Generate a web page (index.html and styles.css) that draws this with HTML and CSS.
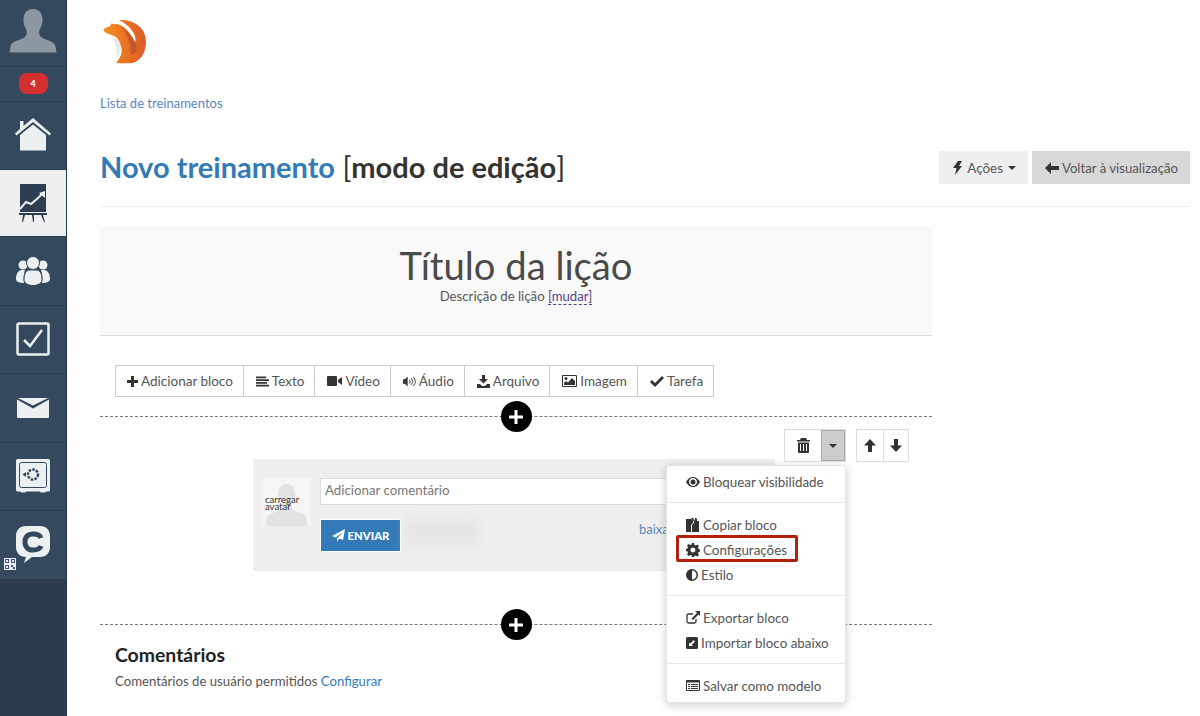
FILE: index.html
```html
<!DOCTYPE html>
<html lang="pt-br">
<head>
    <meta charset="UTF-8">
    <meta name="viewport" content="width=device-width, initial-scale=1.0">
    <title>Novo treinamento</title>
    <link rel="stylesheet" href="styles.css">
</head>
<body>
    <!-- Menu lateral -->
    <nav class="sidebar">
        <a class="side-item side-user">
            <svg width="48" height="44" viewBox="0 0 48 44"><path fill="#8d97a3" d="M24 0c7 0 9.500 5 9.500 11 0 4-1 6-2.500 9-1.500 3-1 6 1 8 3 2.500 13 4 14.500 9l1 6.500H.5l1-6.500c1.500-5 11.500-6.500 14.500-9 2-2 2.500-5 1-8-1.500-3-2.500-5-2.500-9C14.500 5 17 0 24 0z"/></svg>
        </a>
        <a class="side-item side-badge"><span class="badge">4</span></a>
        <a class="side-item">
            <svg width="36" height="34" viewBox="0 0 36 34"><path fill="#ecf0f1" d="M18 0 36 15.500l-1.500 2L18 4 1.500 17.500 0 15.500 5 11V3h3.500v5z"/><path fill="#ecf0f1" d="M18 6.500 31 17v15.500H5V17z"/></svg>
        </a>
        <a class="side-item active">
            <svg width="28" height="38" viewBox="0 0 28 38"><path fill="#2d3e50" d="M1 0h26v28H1z"/><path fill="none" stroke="#ecf0f1" stroke-width="2" d="M1 25l6-7 5 2 7-6 5-5"/><path fill="#ecf0f1" d="M26 7v7l-6-5z"/><path fill="#2d3e50" d="M0 29h28v2H0zM4 31h2l-2 7H3zM13 31h2v7h-1zM22 31h2l2 7h-1z"/></svg>
        </a>
        <a class="side-item">
            <svg width="34" height="30" viewBox="0 0 34 30"><g fill="#ecf0f1"><circle cx="7" cy="9" r="4.500"/><circle cx="27" cy="9" r="4.500"/><path d="M0 23c0-6 3-9 6-9h3c-1 3-2 8-1 13-4 0-8-1-8-4zM34 23c0-6-3-9-6-9h-3c1 3 2 8 1 13 4 0 8-1 8-4z"/><circle cx="17" cy="7" r="6.500" stroke="#34495e"/><path stroke="#34495e" d="M8 24c0-8 3-10 6-10h6c3 0 6 2 6 10 0 3-4 5.500-9 5.500S8 27 8 24z"/></g></svg>
        </a>
        <a class="side-item">
            <svg width="34" height="34" viewBox="0 0 34 34"><rect x="1.500" y="1.500" width="31" height="31" rx="1.500" fill="none" stroke="#ecf0f1" stroke-width="2.500"/><path fill="none" stroke="#ecf0f1" stroke-width="2.500" d="M8 18l6 6L26 8"/></svg>
        </a>
        <a class="side-item">
            <svg width="32" height="20" viewBox="0 0 32 20"><path fill="#ecf0f1" d="M1 0h30L16 7.500zM0 1.500l16 9 16-9V19q0 1-1 1H1q-1 0-1-1z"/></svg>
        </a>
        <a class="side-item">
            <svg width="34" height="34" viewBox="0 0 34 34"><path fill="#ecf0f1" d="M1.500 0h31Q34 0 34 1.500V31q0 1.500-1.500 1.500H30l-1 1h-4l-1-1H10l-1 1H5l-1-1H1.500Q0 32.500 0 31V1.500Q0 0 1.500 0z"/><rect x="3.500" y="3.500" width="27" height="25" rx="2" fill="none" stroke="#34495e"/><circle cx="17" cy="15.500" r="5" fill="none" stroke="#34495e" stroke-width="2.500" stroke-dasharray="2.500 1.200"/><path fill="#34495e" d="M6.500 15.500l3.500-2.500v5z"/></svg>
        </a>
        <a class="side-item side-chat">
            <svg width="34" height="38" viewBox="0 0 34 38"><path fill="#ecf0f1" d="M10 0h14c6 0 10 4 10 10v11c0 6-4 10-10 10H16l-8 6 2-6C4 31 0 27 0 21V10C0 4 4 0 10 0z"/><path fill="none" stroke="#34495e" stroke-width="5" d="M25 12c-1-3-4-4-8-4-5 0-8 3-8 8s3 8 8 8c4 0 7-1 8-4"/></svg>
            <svg class="qr" width="12" height="12" viewBox="0 0 12 12"><path fill="#ecf0f1" d="M0 0h12v12H0z"/><path fill="#3f4f8f" d="M1 1h4v4H1zM7 1h4v4H7zM1 7h4v4H1zM7 7h2v2H7zM9 9h2v2H9z"/><path fill="#ecf0f1" d="M2 2h2v2H2zM8 2h2v2H8zM2 8h2v2H2z"/></svg>
        </a>
    </nav>

    <main class="content">
        <svg class="logo" width="50" height="48" viewBox="0 0 50 48">
            <defs><linearGradient id="laranja" x1="0" y1="0" x2="1" y2="0"><stop offset="0" stop-color="#f78d1e"/><stop offset="1" stop-color="#dd5b28"/></linearGradient></defs>
            <path fill="#e8eaea" d="M9 17c5 3 7 9 8 23 3-5 5-10 4-14-2-5-6-7-12-9z"/>
            <path fill="url(#laranja)" d="M3.300 12C5 9 9 9 10 8l1.700-2.700c1.300.7 2.300 1.200 4.300.7 8 0 15 10 19 18 2-4-1-14-16-22 15-1 27 8 27 22 0 12-7 21-16 21.300H16c3-4.300 6-8.300 5.700-13.300-.7-6-2.700-11-6.700-13.500-4-2.500-10-2.500-11.700-6.500z"/>
            <path fill="#a8482a" opacity=".55" d="M22 10c8 5 13 12 15 20-1 5-4 8-6 6 0-10-4-19-9-26z"/>
        </svg>

        <a class="crumb">Lista de treinamentos</a>

        <header class="page-head">
            <h1><span class="title-link">Novo treinamento</span> <span class="title-mode">[<b>modo de edição</b>]</span></h1>
            <div class="head-actions">
                <button class="head-btn">
                    <svg width="9" height="14" viewBox="0 0 9 14"><path fill="#333" d="M5 0h4L6 5h3L2 14l1.500-7H0z"/></svg>
                    Ações <i class="caret"></i>
                </button>
                <button class="head-btn dark">
                    <svg width="14" height="12" viewBox="0 0 14 12"><path fill="#333" d="M6 0v4h8v4H6v4L0 6z"/></svg>
                    Voltar à visualização
                </button>
            </div>
        </header>

        <div class="column">
            <section class="lesson-head">
                <h2>Título da lição</h2>
                <p>Descrição de lição <a class="change">[mudar]</a></p>
            </section>

            <div class="add-bar">
                <a class="add-item">
                    <svg width="11" height="11" viewBox="0 0 11 11"><path fill="#333" d="M4 0h3v4h4v3H7v4H4V7H0V4h4z"/></svg>
                    Adicionar bloco
                </a>
                <a class="add-item">
                    <svg width="13" height="11" viewBox="0 0 14 11"><path fill="#333" d="M0 0h11v2H0zM0 3h14v2H0zM0 6h12v2H0zM0 9h14v2H0z"/></svg>
                    Texto
                </a>
                <a class="add-item">
                    <svg width="15" height="10" viewBox="0 0 15 10"><path fill="#333" d="M1 0h8q1 0 1 1v8q0 1-1 1H1q-1 0-1-1V1q0-1 1-1zM11 4l4-3v8l-4-3z"/></svg>
                    Vídeo
                </a>
                <a class="add-item">
                    <svg width="13" height="11" viewBox="0 0 14 11"><path fill="#333" d="M0 3h2l3-3v11L2 8H0z"/><path fill="none" stroke="#333" d="M7 3.500q1.500 2 0 4M9 2q3 3.500 0 7M11 .5q4.500 5 0 10"/></svg>
                    Áudio
                </a>
                <a class="add-item">
                    <svg width="13" height="13" viewBox="0 0 13 13"><path fill="#333" d="M5 0h3v4h3L6.500 8.500 2 4h3zM0 9h3l2 2h3l2-2h3v4H0z"/></svg>
                    Arquivo
                </a>
                <a class="add-item">
                    <svg width="15" height="12" viewBox="0 0 15 12"><path fill="#333" d="M1 0h13q1 0 1 1v10q0 1-1 1H1q-1 0-1-1V1q0-1 1-1zm0 1v10h13V1z"/><circle fill="#333" cx="4" cy="3.500" r="1.500"/><path fill="#333" d="M2 10V8l2-2 2 1.500L10 3l3 3v4z"/></svg>
                    Imagem
                </a>
                <a class="add-item">
                    <svg width="14" height="11" viewBox="0 0 14 11"><path fill="#333" d="M0 6l2-2 3 3 7-7 2 2-9 9z"/></svg>
                    Tarefa
                </a>
            </div>

            <div class="divider">
                <span class="plus"><svg width="14" height="14" viewBox="0 0 14 14"><path fill="#fff" d="M5.500 0h3v5.500H14v3H8.500V14h-3V8.500H0v-3h5.500z"/></svg></span>
            </div>

            <div class="block">
                <div class="block-tools">
                    <div class="tool-group">
                        <button class="tool wide">
                            <svg width="13" height="15" viewBox="0 0 13 15"><path fill="#333" d="M4 0h5l1 2h3v1.500H0V2h3zM1 4.500h11V14q0 1-1 1H2q-1 0-1-1zM3 6v7h1V6zm3 0v7h1V6zm3 0v7h1V6z"/></svg>
                        </button>
                        <button class="tool toggle"><i class="caret"></i></button>
                    </div>
                    <div class="tool-group">
                        <button class="tool">
                            <svg width="12" height="13" viewBox="0 0 12 13"><path fill="#333" d="M6 0l6 6.500H8V13H4V6.500H0z"/></svg>
                        </button>
                        <button class="tool">
                            <svg width="12" height="13" viewBox="0 0 12 13"><path fill="#333" d="M4 0h4v6.500h4L6 13 0 6.500h4z"/></svg>
                        </button>
                    </div>
                </div>

                <div class="comment-card">
                    <div class="avatar">
                        <svg width="47" height="48" viewBox="0 0 47 48"><path fill="#e3e3e3" d="M23.500 6c6 0 8.500 4 8.500 10 0 4-1 6-2.500 9-1.500 3-1 5 1 7 3 2 11 3 13 7l1 9H3l1-9c2-4 10-5 13-7 2-2 2.500-4 1-7-1.500-3-2.500-5-2.500-9 0-6 2.500-10 8.500-10z"/></svg>
                        <span class="avatar-label">carregar avatar</span>
                    </div>
                    <div class="comment-form">
                        <input class="comment-input" type="text" placeholder="Adicionar comentário">
                        <div class="comment-actions">
                            <button class="send">
                                <svg width="13" height="13" viewBox="0 0 13 13"><path fill="#fff" d="M13 0l-2 11-4-1.500L5 13v-3.500L11 3 3.500 8.500 0 7z"/></svg>
                                ENVIAR
                            </button>
                            <div class="blurred"></div>
                            <a class="download">baixa</a>
                        </div>
                    </div>
                </div>

                <!-- Menu do bloco -->
                <ul class="block-menu">
                    <li class="menu-item">
                        <svg width="14" height="10" viewBox="0 0 14 10"><path fill="#333" fill-rule="evenodd" d="M7 0c3 0 5.500 2 7 5-1.500 3-4 5-7 5S1.500 8 0 5c1.500-3 4-5 7-5zm0 1C4.500 1 3 3 3 5s2 4 4 4 4-2 4-4-1.500-4-4-4z"/><circle fill="#333" cx="7" cy="5" r="2.500"/></svg>
                        Bloquear visibilidade
                    </li>
                    <li class="menu-sep"></li>
                    <li class="menu-item">
                        <svg width="14" height="14" viewBox="0 0 14 14"><path fill="#333" d="M0 1h5l2 2v2L5 7v7H0zM5 0h2l2 3H7zM8 3h1V0h1l3 3v11H6V7l2-2zM11 1v2h2z"/></svg>
                        Copiar bloco
                    </li>
                    <li class="menu-item marked">
                        <svg width="14" height="14" viewBox="0 0 14 14"><path fill="#333" fill-rule="evenodd" d="M6 0h2l.400 2 1.300.500L11.500 1.500 13 3l-1 1.700.500 1.300L14 6.500v2l-1.500.400-.500 1.300 1 1.800-1.500 1.500-1.800-1-1.300.500L8 14H6l-.400-1.500-1.300-.500-1.800 1L1 11.500l1-1.800-.500-1.300L0 8V6l1.500-.400.500-1.300L1 2.500 2.500 1l1.800 1 1.300-.500zM7 4.500a2.500 2.500 0 1 0 0 5 2.500 2.500 0 0 0 0-5z"/></svg>
                        Configurações
                    </li>
                    <li class="menu-item">
                        <svg width="12" height="12" viewBox="0 0 12 12"><path fill="#333" fill-rule="evenodd" d="M6 0a6 6 0 1 1 0 12A6 6 0 0 1 6 0zm0 1.500v9a4.500 4.500 0 0 0 0-9z"/></svg>
                        Estilo
                    </li>
                    <li class="menu-sep"></li>
                    <li class="menu-item">
                        <svg width="14" height="13" viewBox="0 0 14 13"><path fill="none" stroke="#333" stroke-width="1.300" d="M7 3H2.500Q1 3 1 4.500v6Q1 12 2.500 12h6q1.500 0 1.500-1.500V8"/><path fill="#333" d="M9 0h5v5l-1.500-1.500L7 9 5.500 7.500 11 2z"/></svg>
                        Exportar bloco
                    </li>
                    <li class="menu-item">
                        <svg width="12" height="12" viewBox="0 0 12 12"><path fill="#333" d="M1.500 0h9Q12 0 12 1.500v9q0 1.500-1.500 1.500h-9Q0 12 0 10.500v-9Q0 0 1.500 0z"/><path fill="#fff" d="M3 9V5.500L4.300 6.800 7.500 3 9 4.500 5.700 8 7 9z"/></svg>
                        Importar bloco abaixo
                    </li>
                    <li class="menu-sep"></li>
                    <li class="menu-item">
                        <svg width="14" height="11" viewBox="0 0 14 11"><path fill="#333" fill-rule="evenodd" d="M1 0h12q1 0 1 1v9q0 1-1 1H1q-1 0-1-1V1q0-1 1-1zm0 2.500V10h12V2.500zM2 4h2v1H2zm3 0h7v1H5zM2 6h2v1H2zm3 0h7v1H5zM2 8h2v1H2zm3 0h7v1H5z"/></svg>
                        Salvar como modelo
                    </li>
                </ul>
            </div>

            <div class="divider second">
                <span class="plus"><svg width="14" height="14" viewBox="0 0 14 14"><path fill="#fff" d="M5.500 0h3v5.500H14v3H8.500V14h-3V8.500H0v-3h5.500z"/></svg></span>
            </div>

            <section class="comments">
                <h3>Comentários</h3>
                <p>Comentários de usuário permitidos <a class="link">Configurar</a></p>
            </section>
        </div>
    </main>
</body>
</html>
```

FILE: styles.css
```css
* {
    box-sizing: border-box;
}

html, body {
    height: 100%;
}

body {
    margin: 0;
    display: flex;
    overflow: hidden;
    font-family: "Lato", Arial, sans-serif;
    font-size: 13.5px;
    color: #555;
    background-color: #fff;
}

/* Menu lateral */
.sidebar {
    width: 67px;
    flex-shrink: 0;
    height: 716px;
    display: flex;
    flex-direction: column;
    background-color: #2c3c4e;
    border-right: 1px solid #24384c;
}

.side-item {
    position: relative;
    height: 68.5px;
    display: flex;
    align-items: center;
    justify-content: center;
    background-color: #34495e;
    border-bottom: 1px solid #2c3e50;
}

.side-user {
    height: 67px;
    align-items: flex-end;
    padding-bottom: 13px;
}

.side-badge {
    height: 34.5px;
}

.side-item.active {
    height: 67px;
    background-color: #efefef;
}

.badge {
    width: 29px;
    height: 21px;
    border-radius: 8px;
    background-color: #d32f2f;
    color: #fff;
    font-size: 9px;
    font-weight: 900;
    line-height: 21px;
    text-align: center;
}

.qr {
    position: absolute;
    left: 4px;
    bottom: 9px;
}

/* Conteudo */
.content {
    flex: 1;
    min-width: 0;
    padding: 18px 10px 0 33px;
}

.logo {
    display: block;
}

.crumb {
    display: block;
    margin-top: 29px;
    color: #5b87b9;
    font-size: 13px;
    line-height: 17px;
}

.page-head {
    display: flex;
    justify-content: space-between;
    align-items: center;
    height: 64px;
    margin-top: 31px;
    padding-bottom: 14px;
    border-bottom: 1px solid #eee;
}

.page-head h1 {
    margin: -3px 0 0;
    font-size: 29px;
    font-weight: 400;
    color: #333;
}

.title-link {
    color: #337ab7;
    font-weight: 700;
}

.title-mode b {
    font-weight: 700;
}

.head-actions {
    display: flex;
    gap: 4px;
}

.head-btn {
    height: 33px;
    padding: 0 12px 0 14px;
    display: flex;
    align-items: center;
    gap: 5px;
    border: none;
    background-color: #eee;
    color: #555;
    font-family: inherit;
    font-size: 13.4px;
}

.head-btn.dark {
    padding-left: 13px;
    gap: 3px;
    background-color: #d8d8d8;
    font-size: 13.2px;
}

.caret {
    display: inline-block;
    width: 0;
    height: 0;
    border-top: 4px solid #333;
    border-left: 4px solid transparent;
    border-right: 4px solid transparent;
}

.column {
    width: 832px;
}

.lesson-head {
    margin-top: 19px;
    height: 110px;
    padding-top: 16px;
    background-color: #f9f9f9;
    border-bottom: 1px solid #ddd;
    text-align: center;
}

.lesson-head h2 {
    margin: 0;
    font-size: 38.2px;
    font-weight: 400;
    line-height: 46px;
    color: #4a4a4a;
}

.lesson-head p {
    margin: 0;
    font-size: 13.2px;
    line-height: 17px;
}

.change {
    color: #5a3d8a;
    border-bottom: 1px dashed #5a3d8a;
}

.add-bar {
    display: inline-flex;
    margin: 29px 0 0 15px;
    height: 32px;
    border: 1px solid #ccc;
    vertical-align: top;
}

.add-item {
    display: flex;
    align-items: center;
    gap: 3px;
    padding: 0 10px 0 12px;
    border-left: 1px solid #ccc;
}

.add-item:first-child {
    padding-left: 11px;
    border-left: none;
}

.divider {
    position: relative;
    display: flex;
    justify-content: center;
    height: 0;
    margin-top: 19px;
    border-top: 1px dashed #777;
}

.divider.second {
    margin-top: 53px;
}

.plus {
    position: absolute;
    top: -16px;
    width: 31px;
    height: 31px;
    display: flex;
    align-items: center;
    justify-content: center;
    border-radius: 50%;
    background-color: #000;
}

/* Bloco de comentario */
.block {
    position: relative;
}

.block-tools {
    display: flex;
    justify-content: flex-end;
    gap: 10px;
    margin: 12px 23px 0 0;
    height: 33px;
}

.tool-group {
    display: flex;
    border: 1px solid #ddd;
}

.tool {
    width: 25.5px;
    padding: 0;
    display: flex;
    align-items: center;
    justify-content: center;
    border: none;
    background-color: #fff;
}

.tool + .tool {
    border-left: 1px solid #ddd;
}

.tool.wide {
    width: 36px;
}

.tool.toggle {
    width: 24px;
    background-color: #ccc;
    border: 1px solid #aaa;
}

.comment-card {
    width: 522px;
    height: 112px;
    margin: -3px 0 0 153px;
    padding: 19px 10px;
    display: flex;
    gap: 10px;
    background-color: #efefef;
}

.avatar {
    position: relative;
    width: 47px;
    height: 48px;
    flex-shrink: 0;
    background-color: #f6f6f6;
}

.avatar svg {
    display: block;
}

.avatar-label {
    position: absolute;
    left: 2px;
    top: 18px;
    width: 40px;
    color: #333;
    font-size: 9.5px;
    line-height: 7px;
}

.comment-form {
    flex: 1;
}

.comment-input {
    display: block;
    width: 100%;
    height: 27px;
    padding: 0 4px 3px;
    border: 1px solid #ddd;
    font-family: inherit;
    font-size: 13.3px;
}

.comment-input::placeholder {
    color: #777;
}

.comment-actions {
    display: flex;
    align-items: flex-start;
    margin-top: 14px;
}

.send {
    width: 81px;
    height: 33px;
    padding: 0;
    display: flex;
    align-items: center;
    justify-content: center;
    gap: 3px;
    border: 1px solid #fff;
    background-color: #337ab7;
    color: #fff;
    font-family: inherit;
    font-size: 11.3px;
    font-weight: 900;
}

.blurred {
    width: 74px;
    height: 28px;
    margin-left: 4px;
    background-color: #e6e6e6;
    filter: blur(4px);
}

.download {
    margin: 2px 0 0 160px;
    color: #5b87b9;
    font-size: 13px;
}

/* Menu do bloco */
.block-menu {
    position: absolute;
    z-index: 2;
    left: 566px;
    top: 36px;
    width: 180px;
    height: 238px;
    margin: 0;
    padding: 3px 0;
    list-style: none;
    background-color: #fff;
    border-radius: 4px;
    border: 1px solid #e4e4e4;
    box-shadow: 0 2px 10px rgba(0, 0, 0, .2);
}

.menu-item {
    position: relative;
    height: 25px;
    padding-left: 19px;
    display: flex;
    align-items: center;
    gap: 3px;
    font-size: 13.4px;
}

.menu-item.marked::after {
    content: "";
    position: absolute;
    left: 9px;
    top: -2px;
    width: 116px;
    height: 21px;
    border: 3px solid #b3200c;
    border-radius: 2px;
}

.menu-sep {
    height: 1px;
    margin: 8px 0 9px;
    background-color: #e5e5e5;
}

.comments {
    padding: 19px 0 0 15px;
}

.comments h3 {
    margin: 0;
    font-size: 19.4px;
    line-height: 22px;
    color: #222;
}

.comments p {
    margin: 6px 0 0;
    font-size: 13.2px;
    line-height: 18px;
}

.link {
    color: #337ab7;
}
```
